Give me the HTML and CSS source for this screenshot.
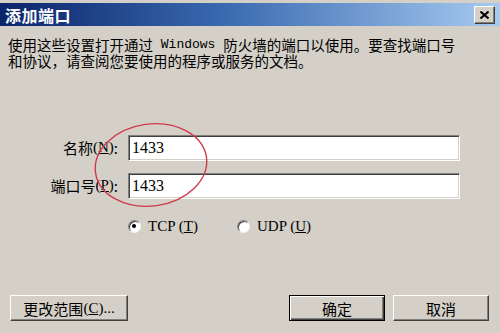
FILE: index.html
```html
<!DOCTYPE html>
<html lang="zh-CN">
<head>
    <meta charset="UTF-8">
    <title>添加端口</title>
    <link rel="stylesheet" href="styles.css">
</head>
<body>
    <div class="window">
        <div class="titlebar">
            <span class="title">添加端口</span>
            <span class="close">
                <svg width="9" height="8" viewBox="0 0 9 8"><path d="M0.5 0.5 L8.5 7.5 M8.5 0.5 L0.5 7.5" stroke="#000" stroke-width="2"/></svg>
            </span>
        </div>
        <div class="content">
            <p class="desc">使用这些设置打开通过<span class="latin"> Windows </span>防火墙的端口以使用。要查找端口号<br>和协议，请查阅您要使用的程序或服务的文档。</p>
            <div class="fields">
                <label class="field-label">名称<span class="latin">(<u>N</u>)</span>:</label>
                <div class="input">1433</div>
                <label class="field-label">端口号<span class="latin">(<u>P</u>)</span>:</label>
                <div class="input">1433</div>
            </div>
            <div class="protocols">
                <span class="radio"><span class="dot checked"></span><span>TCP (<u>T</u>)</span></span>
                <span class="radio"><span class="dot"></span><span>UDP (<u>U</u>)</span></span>
            </div>
            <div class="buttons">
                <span class="btn wide">更改范围<span class="latin">(<u>C</u>)...</span></span>
                <span class="btn-group">
                    <span class="btn default">确定</span>
                    <span class="btn">取消</span>
                </span>
            </div>
        </div>
        <!-- red hand-drawn mark over the fields -->
        <svg class="mark" width="120" height="92" viewBox="0 0 120 92">
            <ellipse cx="60" cy="46" rx="56" ry="41" fill="none" stroke="#cf3a4a" stroke-width="1.4" transform="rotate(-8 60 46)"/>
        </svg>
    </div>
</body>
</html>
```

FILE: styles.css
```css
html, body {
    margin: 0;
    padding: 0;
    background: #d4d0c8;
}
.window {
    position: relative;
    width: 500px;
    height: 333px;
    overflow: hidden;
    background: #d4d0c8;
    padding-top: 3px;
    box-sizing: border-box;
    font-family: "Noto Sans CJK SC", sans-serif;
    color: #000;
}
.titlebar {
    height: 23px;
    display: flex;
    align-items: center;
    justify-content: space-between;
    padding: 0 5px 0 5px;
    background: linear-gradient(to right, #0a246a 0%, #3a6ab0 45%, #a6caf0 100%);
}
.title {
    color: #fff;
    font-weight: bold;
    font-size: 16px;
    letter-spacing: 0.5px;
}
.close {
    width: 21px;
    height: 18px;
    box-sizing: border-box;
    display: flex;
    align-items: center;
    justify-content: center;
    background: #d4d0c8;
    border: 1px solid;
    border-color: #fff #404040 #404040 #fff;
    box-shadow: inset -1px -1px #808080;
}
.content {
    padding: 11px 8px 0 8px;
}
.desc {
    margin: 0;
    height: 32px;
    font-size: 14.5px;
    line-height: 16px;
    white-space: nowrap;
}
.latin {
    font-family: "Liberation Mono", monospace;
    font-size: 13px;
    line-height: 16px;
    vertical-align: top;
}
.fields {
    display: grid;
    grid-template-columns: 110px 332px;
    column-gap: 10px;
    row-gap: 12px;
    margin-top: 66px;
}
.field-label {
    text-align: right;
    font-size: 15px;
    line-height: 25px;
}
.field-label .latin {
    font-family: "Liberation Serif", serif;
    font-size: 15px;
    line-height: 25px;
}
.input {
    height: 26px;
    box-sizing: border-box;
    background: #fff;
    border: 1px solid;
    border-color: #808080 #fff #fff #808080;
    box-shadow: inset 1px 1px #404040, inset -1px -1px #d4d0c8;
    padding: 0 3px;
    font-family: "Liberation Serif", serif;
    font-size: 16px;
    line-height: 23px;
}
.protocols {
    display: flex;
    margin: 19px 0 0 120px;
    font-family: "Liberation Serif", serif;
    font-size: 15px;
}
.radio {
    width: 109px;
    display: flex;
    align-items: center;
    gap: 7px;
    height: 16px;
}
.dot {
    position: relative;
    width: 13px;
    height: 13px;
    box-sizing: border-box;
    border-radius: 50%;
    background: #fff;
    border: 1px solid;
    border-color: #808080 #f4f4f4 #f4f4f4 #808080;
    box-shadow: inset 1px 1px #404040;
}
.dot.checked::after {
    content: "";
    position: absolute;
    left: 3px;
    top: 3px;
    width: 4px;
    height: 4px;
    border-radius: 50%;
    background: #000;
}
.buttons {
    display: flex;
    justify-content: space-between;
    margin: 61px 3px 0 2px;
}
.btn-group {
    display: flex;
    gap: 8px;
}
.btn {
    width: 96px;
    height: 26px;
    box-sizing: border-box;
    display: flex;
    align-items: center;
    justify-content: center;
    background: #d4d0c8;
    border: 1px solid;
    border-color: #fff #404040 #404040 #fff;
    box-shadow: inset -1px -1px #808080;
    font-size: 15px;
}
.btn.wide {
    width: 118px;
}
.btn.wide .latin {
    font-family: "Liberation Serif", serif;
    font-size: 15px;
}
.btn.default {
    border: 1px solid #000;
    box-shadow: inset 1px 1px #fff, inset -1px -1px #404040, inset -2px -2px #808080;
}
.mark {
    position: absolute;
    left: 91px;
    top: 119px;
}
```
